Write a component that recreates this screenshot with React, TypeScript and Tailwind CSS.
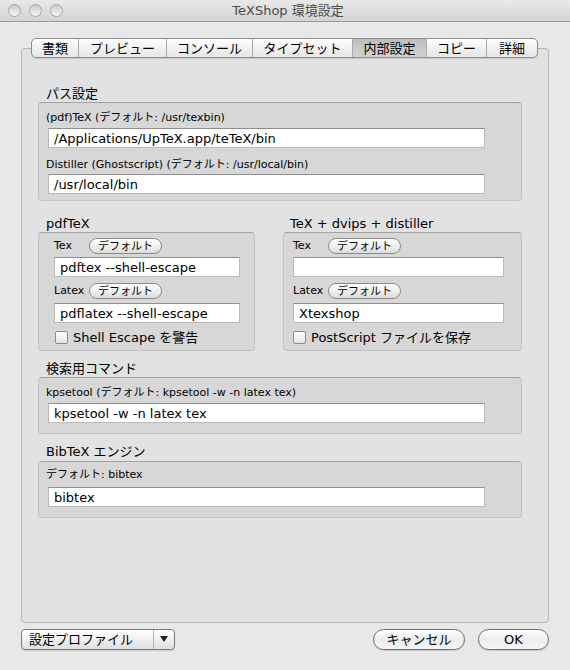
import React from "react";

const JP = '"DejaVu Sans", "Noto Sans CJK JP", sans-serif';

function Field({ value, w }: { value: string; w: string }) {
  return (
    <div
      className={`${w} h-[20px] bg-white border border-[#b9b9b9] border-t-[#8e8e8e] flex items-center pl-[5px] text-[13px] text-black leading-none`}
    >
      {value}
    </div>
  );
}

function SmallButton() {
  return (
    <div className="w-[73px] h-[16px] rounded-full border border-[#8a8a8a] bg-gradient-to-b from-[#ffffff] via-[#f0f0f0] to-[#dcdcdc] flex items-center justify-center text-[11px] text-black leading-none">
      デフォルト
    </div>
  );
}

function Check({ label }: { label: string }) {
  return (
    <div className="flex items-center gap-[5px] h-[14px]">
      <div className="w-[13px] h-[13px] rounded-[2px] border border-[#8a8a8a] bg-gradient-to-b from-white to-[#e4e4e4]" />
      <span className="text-[13px] leading-none text-black">{label}</span>
    </div>
  );
}

function GroupBox({ className, children }: { className: string; children: React.ReactNode }) {
  return (
    <div className={`rounded-[4px] border border-[#c2c2c2] border-t-[#a3a3a3] bg-[#d7d7d7] ${className}`}>
      {children}
    </div>
  );
}

const tabs: { label: string; w: string; sel?: boolean }[] = [
  { label: "書類", w: "w-[47px]" },
  { label: "プレビュー", w: "w-[88px]" },
  { label: "コンソール", w: "w-[86px]" },
  { label: "タイプセット", w: "w-[100px]" },
  { label: "内部設定", w: "w-[74px]", sel: true },
  { label: "コピー", w: "w-[60px]" },
  { label: "詳細", w: "w-[50px]" },
];

export default function App() {
  return (
    <div
      className="w-[570px] h-[670px] bg-[#e8e8e8] flex flex-col overflow-hidden text-black"
      style={{ fontFamily: JP }}
    >
      {/* Title bar */}
      <div className="h-[22px] shrink-0 bg-gradient-to-b from-[#e9e9e9] to-[#d3d3d3] border-b border-[#9c9c9c] flex items-center relative">
        <div className="flex gap-[8px] pl-[8px]">
          {[0, 1, 2].map((i) => (
            <div
              key={i}
              className="w-[13px] h-[13px] rounded-full border border-[#a8a8a8] bg-gradient-to-b from-[#c8c8c8] via-[#e2e2e2] to-[#f4f4f4]"
            />
          ))}
        </div>
        <div className="flex-1 text-center text-[13px] text-[#4a4a4a] pr-[57px]">TeXShop 環境設定</div>
      </div>

      {/* Tab view */}
      <div className="pt-[16px] pl-[21px]">
        <div className="w-[528px] flex justify-center relative z-10 mb-[-10px] pr-[1px]">
          <div className="flex h-[20px] rounded-[5px] border border-[#8d8d8d] overflow-hidden bg-gradient-to-b from-[#ffffff] via-[#f1f1f1] to-[#e6e6e6] shadow-[0_1px_1px_rgba(0,0,0,0.12)]">
            {tabs.map((t, i) => (
              <div
                key={t.label}
                className={`${t.w} flex items-center justify-center text-[13px] leading-none ${
                  i < tabs.length - 1 ? "border-r border-[#a9a9a9]" : ""
                } ${t.sel ? "bg-gradient-to-b from-[#bcbcbc] via-[#c9c9c9] to-[#d2d2d2]" : ""}`}
              >
                {t.label}
              </div>
            ))}
          </div>
        </div>

        <div className="w-[528px] h-[575px] rounded-[4px] border border-[#b6b6b6] bg-[#e2e2e2] pl-[16px] pt-[37px]">
          {/* パス設定 */}
          <div className="pl-[8px] text-[13px] h-[16px] leading-[16px]">パス設定</div>
          <GroupBox className="w-[484px] h-[99px] pt-[8px]">
            <div className="pl-[7px] text-[11px] h-[14px] leading-[14px]">(pdf)TeX (デフォルト: /usr/texbin)</div>
            <div className="ml-[9px] mt-[3px]">
              <Field value="/Applications/UpTeX.app/teTeX/bin" w="w-[437px]" />
            </div>
            <div className="pl-[7px] mt-[10px] text-[11px] h-[14px] leading-[14px]">
              Distiller (Ghostscript) (デフォルト: /usr/local/bin)
            </div>
            <div className="ml-[9px] mt-[2px]">
              <Field value="/usr/local/bin" w="w-[437px]" />
            </div>
          </GroupBox>

          {/* pdfTeX + dvips */}
          <div className="flex mt-[15px] gap-[28px] w-[484px]">
            <div className="flex flex-col">
              <div className="pl-[8px] text-[13px] h-[16px] leading-[16px]">pdfTeX</div>
              <GroupBox className="w-[217px] h-[119px] pl-[15px] pt-[5px]">
                <div className="flex items-center h-[16px]">
                  <span className="w-[35px] text-[11px]">Tex</span>
                  <SmallButton />
                </div>
                <div className="mt-[3px]">
                  <Field value="pdftex --shell-escape" w="w-[186px]" />
                </div>
                <div className="flex items-center h-[16px] mt-[6px]">
                  <span className="w-[35px] text-[11px]">Latex</span>
                  <SmallButton />
                </div>
                <div className="mt-[4px]">
                  <Field value="pdflatex --shell-escape" w="w-[186px]" />
                </div>
                <div className="mt-[7px] pl-[1px]">
                  <Check label="Shell Escape を警告" />
                </div>
              </GroupBox>
            </div>
            <div className="flex flex-col">
              <div className="pl-[7px] text-[13px] h-[16px] leading-[16px]">TeX + dvips + distiller</div>
              <GroupBox className="w-[239px] h-[119px] pl-[9px] pt-[5px]">
                <div className="flex items-center h-[16px]">
                  <span className="w-[35px] text-[11px]">Tex</span>
                  <SmallButton />
                </div>
                <div className="mt-[3px]">
                  <Field value="" w="w-[211px]" />
                </div>
                <div className="flex items-center h-[16px] mt-[6px]">
                  <span className="w-[35px] text-[11px]">Latex</span>
                  <SmallButton />
                </div>
                <div className="mt-[4px]">
                  <Field value="Xtexshop" w="w-[211px]" />
                </div>
                <div className="mt-[7px]">
                  <Check label="PostScript ファイルを保存" />
                </div>
              </GroupBox>
            </div>
          </div>

          {/* 検索用コマンド */}
          <div className="pl-[8px] mt-[10px] text-[13px] h-[16px] leading-[16px]">検索用コマンド</div>
          <GroupBox className="w-[484px] h-[57px] pt-[8px]">
            <div className="pl-[7px] text-[11px] h-[14px] leading-[14px]">kpsetool (デフォルト: kpsetool -w -n latex tex)</div>
            <div className="ml-[9px] mt-[3px]">
              <Field value="kpsetool -w -n latex tex" w="w-[437px]" />
            </div>
          </GroupBox>

          {/* BibTeX */}
          <div className="pl-[8px] mt-[10px] text-[13px] h-[16px] leading-[16px]">BibTeX エンジン</div>
          <GroupBox className="mt-[1px] w-[484px] h-[57px] pt-[6px]">
            <div className="pl-[7px] text-[11px] h-[14px] leading-[14px]">デフォルト: bibtex</div>
            <div className="ml-[9px] mt-[5px]">
              <Field value="bibtex" w="w-[437px]" />
            </div>
          </GroupBox>
        </div>
      </div>

      {/* Bottom buttons */}
      <div className="flex items-center pl-[21px] pr-[21px] mt-[5px]">
        <div className="w-[154px] h-[21px] rounded-[4px] border border-[#7d7d7d] bg-gradient-to-b from-[#ffffff] via-[#f0f0f0] to-[#dedede] flex items-center shadow-[0_1px_1px_rgba(0,0,0,0.15)]">
          <span className="flex-1 pl-[7px] text-[13px] leading-none">設定プロファイル</span>
          <div className="w-[21px] h-full border-l border-[#b5b5b5] flex items-center justify-center">
            <svg width="8" height="6" viewBox="0 0 8 6">
              <path d="M0 0 L8 0 L4 6 Z" fill="#222" />
            </svg>
          </div>
        </div>
        <div className="flex-1" />
        <div className="w-[92px] h-[21px] rounded-full border border-[#6f6f6f] bg-gradient-to-b from-[#ffffff] via-[#ededed] to-[#f6f6f6] flex items-center justify-center text-[13px] leading-none shadow-[0_1px_1px_rgba(0,0,0,0.15)]">
          キャンセル
        </div>
        <div className="w-[71px] h-[21px] ml-[13px] mt-[1px] rounded-full border border-[#6f6f6f] bg-gradient-to-b from-[#ffffff] via-[#ededed] to-[#f6f6f6] flex items-center justify-center text-[13px] leading-none shadow-[0_1px_1px_rgba(0,0,0,0.15)]">
          OK
        </div>
      </div>
    </div>
  );
}
